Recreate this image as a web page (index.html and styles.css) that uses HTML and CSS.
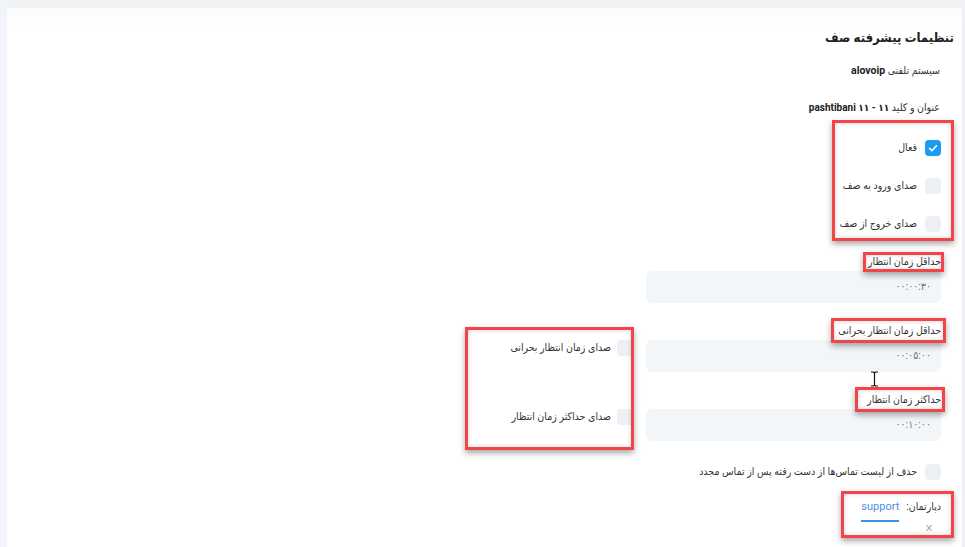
FILE: index.html
```html
<!DOCTYPE html>
<html lang="fa">
<head>
<meta charset="utf-8">
<title>تنظیمات پیشرفته صف</title>
<link rel="stylesheet" href="styles.css">
</head>
<body>
<div class="page">
  <div class="panel" dir="rtl">
    <h1 class="title">تنظیمات پیشرفته صف</h1>
    <p class="info">سیستم تلفنی <b>alovoip</b></p>
    <p class="info info2">عنوان و کلید <b>۱۱ - ۱۱ pashtibani</b></p>

    <div class="checks">
      <label class="check"><span class="box on"><svg viewBox="0 0 16 16" width="16" height="16"><path d="M4.5 8.3l2.4 2.4 4.6-5" fill="none" stroke="#fff" stroke-width="1.5" stroke-linecap="round" stroke-linejoin="round"/></svg></span><span>فعال</span></label>
      <label class="check"><span class="box"></span><span>صدای ورود به صف</span></label>
      <label class="check"><span class="box"></span><span>صدای خروج از صف</span></label>
    </div>

    <div class="row first">
      <div class="field">
        <div class="flabel">حداقل زمان انتظار</div>
        <div class="input">۰۰:۰۰:۳۰</div>
      </div>
    </div>

    <div class="row">
      <div class="field">
        <div class="flabel">حداقل زمان انتظار بحرانی</div>
        <div class="input">۰۰:۰۵:۰۰</div>
      </div>
      <label class="check side"><span class="box"></span><span>صدای زمان انتظار بحرانی</span></label>
    </div>

    <div class="row">
      <div class="field">
        <div class="flabel">حداکثر زمان انتظار</div>
        <div class="input">۰۰:۱۰:۰۰</div>
      </div>
      <label class="check side"><span class="box"></span><span>صدای حداکثر زمان انتظار</span></label>
    </div>

    <label class="check wide"><span class="box"></span><span>حذف از لیست تماس‌ها از دست رفته پس از تماس مجدد</span></label>

    <div class="dept">
      <div class="dept-row"><span>دپارتمان:</span><a class="link">support</a></div>
      <div class="close">✕</div>
    </div>
  </div>

  <div class="mark m1"></div>
  <div class="mark m2"></div>
  <div class="mark m3"></div>
  <div class="mark m4"></div>
  <div class="mark m5"></div>
  <div class="mark m6"></div>
  <svg class="cursor" width="9" height="16" viewBox="0 0 9 16"><path d="M1 1h2.5l1 1 1-1H8M4.5 2v12M1 15h2.5l1-1 1 1H8" fill="none" stroke="#fff" stroke-width="3"/><path d="M1 1h2.5l1 1 1-1H8M4.5 2v12M1 15h2.5l1-1 1 1H8" fill="none" stroke="#111" stroke-width="1.2"/></svg>
</div>
</body>
</html>
```
FILE: styles.css
```css
html, body {
  margin: 0;
  padding: 0;
  background: #eff1f5;
}
.page {
  position: relative;
  width: 965px;
  height: 547px;
  overflow: hidden;
  padding: 8px 3px 0 7px;
  box-sizing: border-box;
  background: linear-gradient(to right, #f1f5f9 0 7px, #eff1f5 7px);
  font-family: Roboto, "DejaVu Sans Condensed", "DejaVu Sans", sans-serif;
  color: #333;
}
.panel {
  background: linear-gradient(to bottom, #fafafa 0, #ffffff 18px);
  height: 539px;
  padding: 0 21px 0 0;
  box-sizing: border-box;
  font-size: 11px;
}
.title {
  margin: 0 -13px 0 0;
  padding-top: 21px;
  font-size: 13px;
  font-weight: bold;
  line-height: 18px;
  color: #222;
}
.info {
  margin: 16px 1px 0 0;
  line-height: 16px;
  font-size: 10.5px;
}
.info2 { margin-top: 21px; }
.info b { font-weight: bold; color: #222; }
.info2 b { font-size: 10px; }
.checks {
  display: flex;
  flex-direction: column;
  gap: 22px;
  margin-top: 24px;
}
.check {
  display: flex;
  align-items: center;
  gap: 8px;
  line-height: 16px;
  font-size: 10.5px;
  color: #333;
}
.box {
  width: 16px;
  height: 16px;
  border-radius: 4px;
  background: #eceff3;
  flex: none;
  display: block;
}
.box.on { background: #1a9cf2; }
.box svg { display: block; }
.row {
  display: flex;
  align-items: flex-start;
  gap: 13px;
  margin-top: 20px;
}
.row.first { margin-top: 22px; }
.field { width: 295px; }
.flabel {
  line-height: 16px;
  margin-bottom: 1px;
  font-size: 10.5px;
  color: #333;
}
.input {
  height: 32px;
  line-height: 32px;
  background: #f3f6f9;
  border-radius: 6px;
  padding-right: 10px;
  font-size: 10.5px;
  color: #6f6f6f;
}
.check.side {
  margin-top: 17px;
  align-items: flex-start;
  gap: 6px;
}
.check.wide { margin-top: 23px; }
.dept {
  margin-top: 19px;
  width: 80px;
}
.dept-row {
  display: flex;
  align-items: flex-start;
  gap: 7px;
  font-size: 10.5px;
  line-height: 16px;
}
.link {
  color: #4b8fe6;
  border-bottom: 2px solid #3d8de4;
  padding-bottom: 5px;
  font-size: 11px;
}
.close {
  margin: 1px 8px 0 0;
  color: #aaa;
  font-size: 11px;
  line-height: 12px;
}
.mark {
  position: absolute;
  border: 3px solid #f24548;
  box-sizing: border-box;
  box-shadow: 0 3px 6px rgba(0,0,0,.35), inset 0 0 4px rgba(0,0,0,.2);
}
.m1 { left: 832px; top: 120px; width: 122px; height: 121px; }
.m2 { left: 863px; top: 252px; width: 81px; height: 20px; }
.m3 { left: 831px; top: 318px; width: 115px; height: 25px; }
.m4 { left: 855px; top: 387px; width: 90px; height: 25px; }
.m5 { left: 465px; top: 327px; width: 169px; height: 123px; }
.m6 { left: 841px; top: 491px; width: 113px; height: 47px; }
.cursor {
  position: absolute;
  left: 870px;
  top: 371px;
}
```
